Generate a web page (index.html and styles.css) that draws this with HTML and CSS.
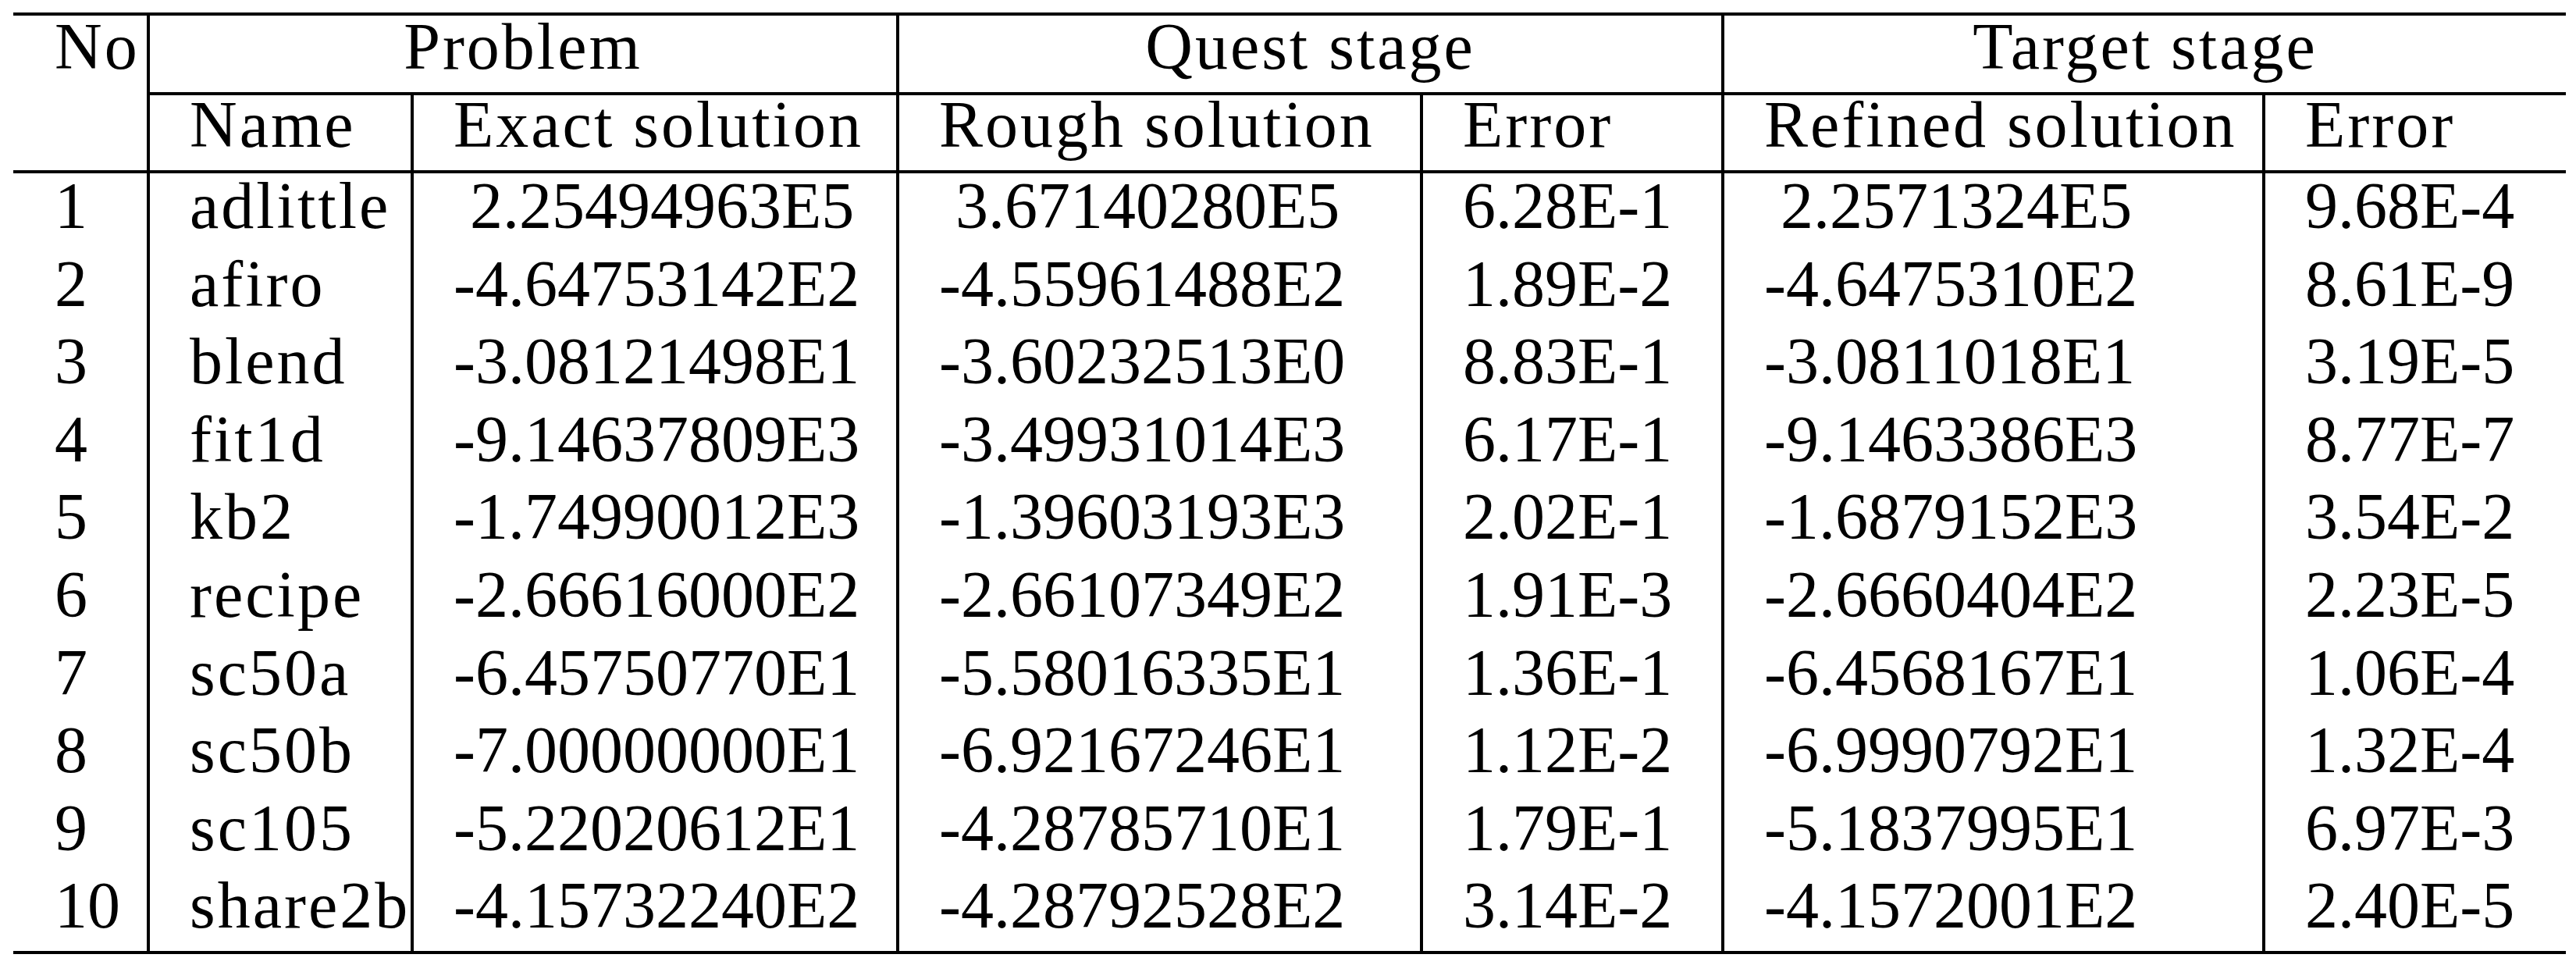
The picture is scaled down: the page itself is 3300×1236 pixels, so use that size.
FILE: index.html
```html
<!DOCTYPE html>
<html lang="en">
<head>
<meta charset="utf-8">
<title>Results</title>
<link rel="stylesheet" href="styles.css">
</head>
<body>
<table class="results">
  <colgroup>
    <col class="c-no">
    <col class="c-name">
    <col class="c-exact">
    <col class="c-rough">
    <col class="c-err">
    <col class="c-refined">
    <col class="c-err2">
  </colgroup>
  <thead>
    <tr class="group-row">
      <th class="no" rowspan="2">No</th>
      <th class="group" colspan="2">Problem</th>
      <th class="group" colspan="2">Quest stage</th>
      <th class="group" colspan="2">Target stage</th>
    </tr>
    <tr class="sub-row">
      <th>Name</th>
      <th>Exact solution</th>
      <th>Rough solution</th>
      <th>Error</th>
      <th>Refined solution</th>
      <th>Error</th>
    </tr>
  </thead>
  <tbody>
    <tr><td>1</td><td class="name">adlittle</td><td>&nbsp;2.25494963E5</td><td>&nbsp;3.67140280E5</td><td>6.28E-1</td><td>&nbsp;2.2571324E5</td><td>9.68E-4</td></tr>
    <tr><td>2</td><td class="name">afiro</td><td>-4.64753142E2</td><td>-4.55961488E2</td><td>1.89E-2</td><td>-4.6475310E2</td><td>8.61E-9</td></tr>
    <tr><td>3</td><td class="name">blend</td><td>-3.08121498E1</td><td>-3.60232513E0</td><td>8.83E-1</td><td>-3.0811018E1</td><td>3.19E-5</td></tr>
    <tr><td>4</td><td class="name">fit1d</td><td>-9.14637809E3</td><td>-3.49931014E3</td><td>6.17E-1</td><td>-9.1463386E3</td><td>8.77E-7</td></tr>
    <tr><td>5</td><td class="name">kb2</td><td>-1.74990012E3</td><td>-1.39603193E3</td><td>2.02E-1</td><td>-1.6879152E3</td><td>3.54E-2</td></tr>
    <tr><td>6</td><td class="name">recipe</td><td>-2.66616000E2</td><td>-2.66107349E2</td><td>1.91E-3</td><td>-2.6660404E2</td><td>2.23E-5</td></tr>
    <tr><td>7</td><td class="name">sc50a</td><td>-6.45750770E1</td><td>-5.58016335E1</td><td>1.36E-1</td><td>-6.4568167E1</td><td>1.06E-4</td></tr>
    <tr><td>8</td><td class="name">sc50b</td><td>-7.00000000E1</td><td>-6.92167246E1</td><td>1.12E-2</td><td>-6.9990792E1</td><td>1.32E-4</td></tr>
    <tr><td>9</td><td class="name">sc105</td><td>-5.22020612E1</td><td>-4.28785710E1</td><td>1.79E-1</td><td>-5.1837995E1</td><td>6.97E-3</td></tr>
    <tr><td>10</td><td class="name">share2b</td><td>-4.15732240E2</td><td>-4.28792528E2</td><td>3.14E-2</td><td>-4.1572001E2</td><td>2.40E-5</td></tr>
  </tbody>
</table>
</body>
</html>
```

FILE: styles.css
```css
html, body {
  margin: 0;
  padding: 0;
  background: #ffffff;
}

body {
  padding: 16px 0 0 17px;
}

.results {
  border-collapse: separate;
  border-spacing: 0;
  table-layout: fixed;
  width: 3270px;
  border-top: 4px solid #000;
  border-bottom: 4px solid #000;
  font-family: "Liberation Serif", "Times New Roman", serif;
  font-size: 84px;
  color: #000;
}

.c-no { width: 171px; }
.c-name { width: 338px; }
.c-exact { width: 622px; }
.c-rough { width: 671px; }
.c-err { width: 386px; }
.c-refined { width: 693px; }
.c-err2 { width: 389px; }

.results th,
.results td {
  padding: 0 0 0 51px;
  text-align: left;
  vertical-align: top;
  font-weight: normal;
  white-space: nowrap;
  overflow: visible;
}

.results th {
  letter-spacing: 3px;
}

.group-row th {
  line-height: 80px;
  padding-bottom: 18px;
}

.group-row .no {
  padding-left: 53px;
  border-bottom: 4px solid #000;
}

.group-row .group {
  padding-left: 0;
  text-align: center;
  border-left: 4px solid #000;
  border-bottom: 4px solid #000;
}

.sub-row th {
  line-height: 76px;
  padding-bottom: 20px;
  border-left: 4px solid #000;
  border-bottom: 4px solid #000;
}

.results td {
  line-height: 84px;
  padding-bottom: 15.6px;
}

.results td:first-child {
  padding-left: 53px;
}

.results td + td {
  border-left: 4px solid #000;
}

.results td.name {
  letter-spacing: 3px;
}
```
